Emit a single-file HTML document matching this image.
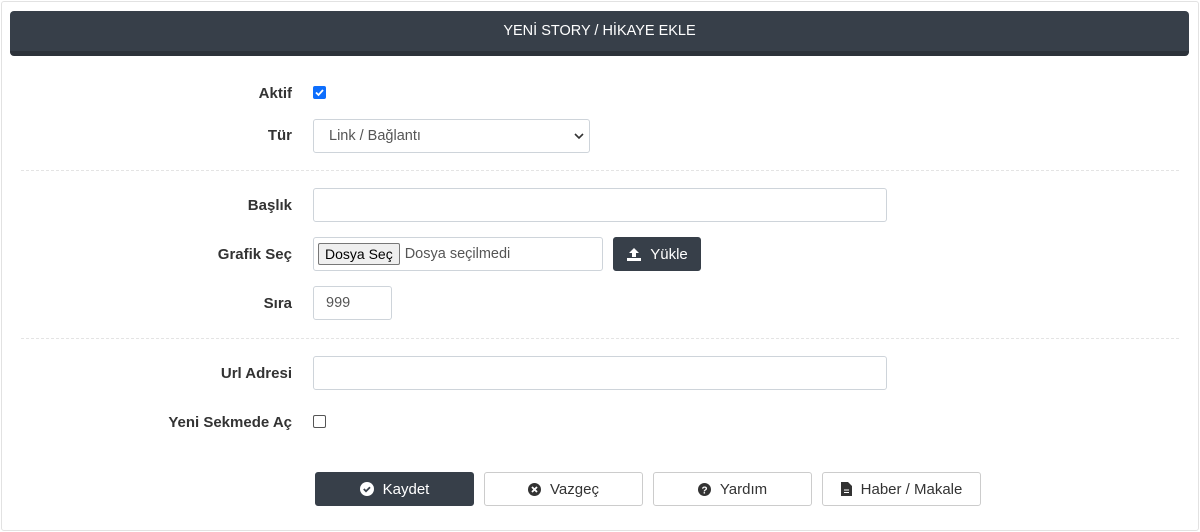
<!DOCTYPE html>
<html><head><meta charset="utf-8"><style>
*{box-sizing:border-box;margin:0;padding:0}
body{width:1200px;height:532px;background:#fff;font-family:"Liberation Sans",sans-serif;position:relative;overflow:hidden;color:#333}
.outer{position:absolute;left:1px;top:1px;width:1198px;height:530px;border:1px solid #e2e2e2;border-radius:3px}
.hdr{position:absolute;left:10px;top:11px;width:1179px;height:45px;background:#373f49;border-radius:4px;border-bottom:5px solid #2c323a;color:#fff;text-align:center;font-size:14.5px;line-height:40px}
.lbl{position:absolute;right:908px;font-weight:bold;font-size:15px;color:#333}
.inp{position:absolute;left:313px;border:1px solid #ced4da;border-radius:3px;height:34px;background:#fff;font-size:14.5px;color:#555}
.hr{position:absolute;left:21px;width:1158px;border-top:1px dashed #e4e4e4}
.cb{position:absolute;left:313px;width:13px;height:13px;border-radius:2px}
.btn{position:absolute;top:472px;height:34px;width:159px;border:1px solid #ccc;border-radius:3px;font-size:15px;display:flex;align-items:center;justify-content:center;gap:9px;color:#333}
.dark{background:#373f49;border-color:#373f49;color:#fff}
</style></head><body>
<div class="outer"></div>
<div class="hdr">YENİ STORY / HİKAYE EKLE</div>

<div class="lbl" style="top:85px">Aktif</div>
<div class="cb" style="top:86px;background:#0d6efd"><svg width="13" height="13"><path d="M3 6.5l2.5 2.5 4.5-5" stroke="#fff" stroke-width="1.8" fill="none"/></svg></div>

<div class="lbl" style="top:127px">Tür</div>
<div class="inp" style="top:119px;width:277px;padding:8px 15px">Link / Bağlantı<svg style="position:absolute;right:5px;top:13px" width="10" height="7"><path d="M1 1l4 4 4-4" stroke="#333" stroke-width="1.6" fill="none"/></svg></div>

<div class="hr" style="top:170px"></div>

<div class="lbl" style="top:197px">Başlık</div>
<div class="inp" style="top:188px;width:574px"></div>

<div class="lbl" style="top:246px">Grafik Seç</div>
<div class="inp" style="top:237px;width:290px;padding:4px 4px;display:flex;align-items:center;gap:5px"><span style="border:1px solid #777;background:#efefef;border-radius:2px;padding:2px 6px;color:#000;font-size:14px">Dosya Seç</span><span style="color:#555">Dosya seçilmedi</span></div>
<div class="btn dark" style="left:613px;top:237px;width:88px;gap:8px"><svg width="16" height="14"><path d="M8 1l5 5h-3v4H6V6H3z M1 11h14v3H1z" fill="#fff"/></svg>Yükle</div>

<div class="lbl" style="top:295px">Sıra</div>
<div class="inp" style="top:286px;width:79px;padding:8px 12px">999</div>

<div class="hr" style="top:338px"></div>

<div class="lbl" style="top:365px">Url Adresi</div>
<div class="inp" style="top:356px;width:574px"></div>

<div class="lbl" style="top:414px">Yeni Sekmede Aç</div>
<div class="cb" style="top:415px;border:1px solid #555"></div>

<div class="btn dark" style="left:315px"><svg width="14" height="14"><circle cx="7" cy="7" r="7" fill="#fff"/><path d="M3.8 7l2.2 2.2 4-4" stroke="#373f49" stroke-width="1.8" fill="none"/></svg>Kaydet</div>
<div class="btn" style="left:484px"><svg width="13" height="13"><circle cx="6.5" cy="6.5" r="6.5" fill="#333"/><path d="M4 4l5 5M9 4l-5 5" stroke="#fff" stroke-width="1.8"/></svg>Vazgeç</div>
<div class="btn" style="left:653px"><svg width="13" height="13"><circle cx="6.5" cy="6.5" r="6.5" fill="#333"/><text x="6.5" y="10.5" font-size="10" font-weight="bold" fill="#fff" text-anchor="middle" font-family="Liberation Sans">?</text></svg>Yardım</div>
<div class="btn" style="left:822px"><svg width="11" height="14"><path d="M0 0h7l4 4v10H0z" fill="#333"/><path d="M3 8h5M3 10.5h5" stroke="#fff" stroke-width="1"/></svg>Haber / Makale</div>
</body></html>
